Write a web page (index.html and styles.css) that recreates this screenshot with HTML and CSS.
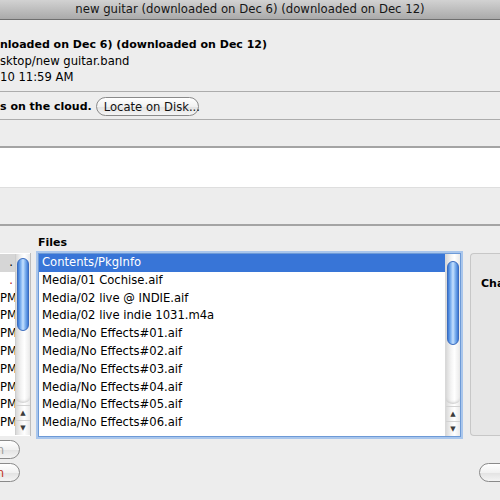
FILE: index.html
```html
<!DOCTYPE html>
<html lang="en">

<head>
    <meta charset="UTF-8">
    <meta name="viewport" content="width=device-width, initial-scale=1.0">
    <title>new guitar</title>
    <link rel="stylesheet" href="styles.css">
</head>

<body>

    <div class="titlebar">new guitar (downloaded on Dec 6) (downloaded on Dec 12)</div>

    <section class="info">
        <div class="b">nloaded on Dec 6) (downloaded on Dec 12)</div>
        <div>sktop/new guitar.band</div>
        <div>10 11:59 AM</div>
    </section>

    <div class="cloud">
        <span class="b">s on the cloud.</span>
        <button class="pill locate">Locate on Disk...</button>
    </div>

    <div class="band"></div>
    <div class="notes"></div>
    <div class="band tall"></div>

    <section class="main">
        <div class="col_left">
            <div class="tbl">
                <div class="rows">
                    <div class="row sel_off">.</div>
                    <div class="row red">.</div>
                    <div class="row">PM</div>
                    <div class="row">PM</div>
                    <div class="row">PM</div>
                    <div class="row">PM</div>
                    <div class="row">PM</div>
                    <div class="row">PM</div>
                    <div class="row">PM</div>
                    <div class="row">PM</div>
                </div>
                <div class="scroll">
                    <div class="knob k_left"></div>
                    <div class="trough_end"></div>
                    <div class="arr">&#9650;</div>
                    <div class="arr">&#9660;</div>
                </div>
            </div>
            <button class="pill small dim">Open</button>
            <button class="pill small warn">Open</button>
        </div>

        <div class="col_files">
            <div class="lbl b">Files</div>
            <div class="list">
                <div class="rows">
                    <div class="row sel">Contents/PkgInfo</div>
                    <div class="row">Media/01 Cochise.aif</div>
                    <div class="row">Media/02 live @ INDIE.aif</div>
                    <div class="row">Media/02 live indie 1031.m4a</div>
                    <div class="row">Media/No Effects#01.aif</div>
                    <div class="row">Media/No Effects#02.aif</div>
                    <div class="row">Media/No Effects#03.aif</div>
                    <div class="row">Media/No Effects#04.aif</div>
                    <div class="row">Media/No Effects#05.aif</div>
                    <div class="row">Media/No Effects#06.aif</div>
                </div>
                <div class="scroll">
                    <div class="knob k_files"></div>
                    <div class="trough_end"></div>
                    <div class="arr">&#9650;</div>
                    <div class="arr">&#9660;</div>
                </div>
            </div>
        </div>

        <div class="col_right">
            <div class="panel">
                <div class="b">Changes</div>
            </div>
            <button class="pill small wide"></button>
        </div>
    </section>

</body>

</html>
```

FILE: styles.css
```css
body {
    margin: 0;
    width: 500px;
    height: 500px;
    overflow: hidden;
    background-color: #ededed;
    font-family: "DejaVu Sans", sans-serif;
    font-size: 11.6px;
    color: #000;
}

.b {
    font-weight: bold;
    font-size: 11px;
}

.titlebar {
    height: 19px;
    line-height: 19px;
    border-bottom: 1px solid #6f6f6f;
    background: linear-gradient(#d2d2d2, #aaaaaa);
    text-align: center;
    font-size: 11.7px;
    color: #161616;
    white-space: nowrap;
}

.info {
    box-sizing: border-box;
    height: 72px;
    padding-top: 17px;
    line-height: 16px;
    border-bottom: 1px solid #acacac;
    white-space: nowrap;
}

.cloud {
    box-sizing: border-box;
    height: 28px;
    padding-top: 5px;
    display: flex;
    align-items: flex-start;
    gap: 4px;
    border-bottom: 1px solid #acacac;
    white-space: nowrap;
}

.cloud .b {
    line-height: 19px;
}

.pill {
    box-sizing: border-box;
    height: 19px;
    padding: 0 7px;
    border: 1px solid #8a8a8a;
    border-radius: 10px;
    background: linear-gradient(#ffffff, #f1f1f1 50%, #e2e2e2 51%, #f4f4f4);
    font-family: "DejaVu Sans", sans-serif;
    font-size: 11.6px;
    color: #111;
    line-height: 16px;
    white-space: nowrap;
}

.locate {
    width: 103px;
}

.band {
    height: 26px;
    border-bottom: 2px solid #a4a4a4;
}

.notes {
    height: 39px;
    background-color: #fff;
    border-bottom: 1px solid #dedede;
}

.band.tall {
    height: 36px;
}

.main {
    display: flex;
    align-items: flex-start;
    padding-top: 9px;
}

/* left table, mostly scrolled out of view */
.col_left {
    width: 31px;
    margin-top: 18px;
    display: flex;
    flex-direction: column;
}

.tbl {
    display: flex;
    height: 183px;
    box-sizing: border-box;
    border-right: 1px solid #bdbdbd;
    background-color: #fff;
    padding-top: 1px;
    padding-bottom: 1px;
}

.tbl .rows {
    width: 15px;
    overflow: hidden;
    text-align: right;
}

.tbl .row {
    padding-right: 2px;
}

.row {
    height: 17.8px;
    line-height: 17.8px;
    white-space: nowrap;
}

.sel_off {
    background-color: #d6d6d6;
}

.red {
    color: #b3201a;
}

.scroll {
    box-sizing: border-box;
    width: 15px;
    display: flex;
    flex-direction: column;
    align-items: center;
    border-left: 1px solid #cdcdcd;
    background: linear-gradient(to right, #d9d9d9, #f3f3f3 35%, #ffffff 60%, #e9e9e9);
}

.knob {
    box-sizing: border-box;
    width: 12px;
    border: 1px solid #3b6cbf;
    border-radius: 6px;
    background: linear-gradient(to right, #3a78d4, #87b8f2 30%, #c6e1ff 50%, #86b7f1 70%, #3e7bd5);
}

.k_left {
    margin-top: 4px;
    height: 73px;
}

.k_files {
    margin-top: 7px;
    height: 84px;
}

.trough_end {
    flex: 1;
    width: 100%;
    border-bottom-left-radius: 7px 5px;
    border-bottom-right-radius: 7px 5px;
    box-shadow: inset 0 -3px 3px -2px #c4c4c4;
    margin-bottom: 2px;
}

.arr {
    width: 100%;
    height: 14px;
    line-height: 14px;
    text-align: center;
    font-size: 7px;
    color: #3c3c3c;
    border-top: 1px solid #d2d2d2;
}

.small {
    height: 19px;
    width: 64px;
    margin-left: -44px;
    text-align: right;
    padding: 0 15px 0 2px;
}

.col_left .dim {
    margin-top: 4px;
    color: #9b9b9b;
}

.col_left .warn {
    margin-top: 4px;
    color: #c2321d;
}

/* file list */
.col_files {
    margin-left: 7px;
}

.lbl {
    line-height: 16px;
    margin-bottom: 2px;
}

.list {
    box-sizing: border-box;
    width: 423px;
    height: 184px;
    display: flex;
    border: 1px solid #6d9ad7;
    box-shadow: 0 0 0 2px #a9c6ec;
    background-color: #fff;
}

.list .rows {
    flex: 1;
    overflow: hidden;
}

.list .row {
    padding-left: 3px;
}

.list .scroll {
    border-left: 1px solid #d9d9d9;
}

.sel {
    background-color: #3875d7;
    color: #fff;
}

.col_right {
    margin-left: 9px;
    margin-top: 18px;
    display: flex;
    flex-direction: column;
}

.panel {
    box-sizing: border-box;
    width: 60px;
    height: 183px;
    padding: 22px 0 0 10px;
    line-height: 16px;
    border: 1px solid #c7c7c7;
    border-right: none;
    border-radius: 4px 0 0 4px;
    background-color: #e6e6e6;
    white-space: nowrap;
}

.wide {
    margin-top: 27px;
    margin-left: 9px;
    width: 60px;
}
```
